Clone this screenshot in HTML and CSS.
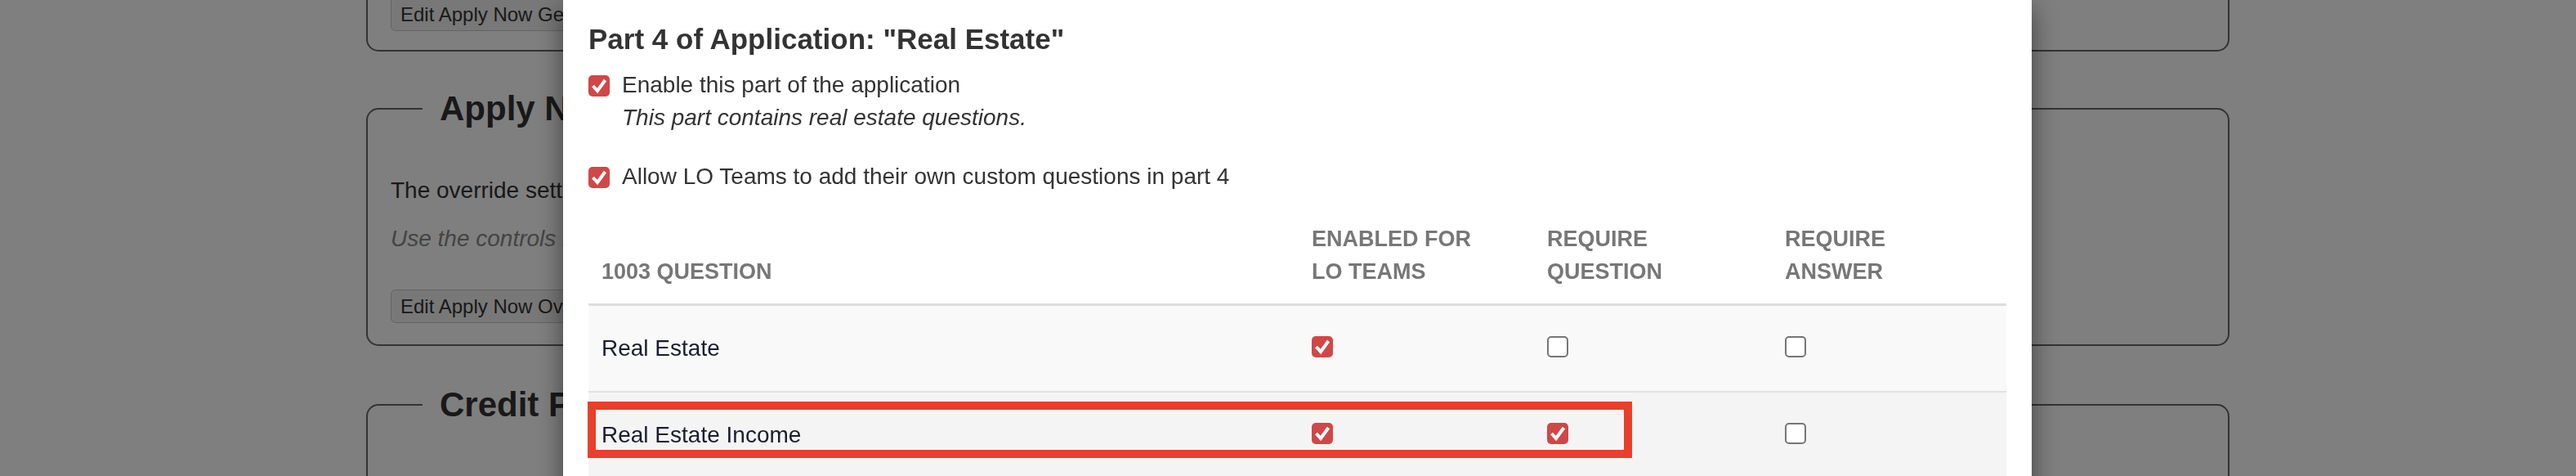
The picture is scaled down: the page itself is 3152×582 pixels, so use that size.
FILE: index.html
```html
<!DOCTYPE html>
<html lang="en">
<head>
<meta charset="utf-8">
<title>Part 4 of Application</title>
<link rel="stylesheet" href="styles.css">
</head>
<body>
<div class="page">
  <fieldset class="box box-first">
    <button class="btn" type="button">Edit Apply Now General</button>
  </fieldset>
  <fieldset class="box box-next">
    <legend class="box-legend">Apply Now</legend>
    <p class="txt txt-first">The override settings</p>
    <p class="txt txt-note">Use the controls below</p>
    <button class="btn btn-space" type="button">Edit Apply Now Overrides</button>
  </fieldset>
  <fieldset class="box box-last">
    <legend class="box-legend">Credit Pull</legend>
    <p class="txt txt-low">Choose how credit reports are requested.</p>
  </fieldset>
</div>

<div class="backdrop"></div>

<div class="modal">
  <h4 class="title">Part 4 of Application: "Real Estate"</h4>

  <div class="opt">
    <span class="cb cb-on"><svg viewBox="0 0 26 26" class="tick"><polyline points="5.5,13 11,19 20.5,6" /></svg></span>
    <div class="opt-text">
      <div>Enable this part of the application</div>
      <div class="opt-note">This part contains real estate questions.</div>
    </div>
  </div>

  <div class="opt opt-second">
    <span class="cb cb-on"><svg viewBox="0 0 26 26" class="tick"><polyline points="5.5,13 11,19 20.5,6" /></svg></span>
    <div class="opt-text">
      <div>Allow LO Teams to add their own custom questions in part 4</div>
    </div>
  </div>

  <table class="qtable">
    <colgroup>
      <col class="col-q">
      <col class="col-a">
      <col class="col-b">
      <col class="col-c">
    </colgroup>
    <thead>
      <tr>
        <th>1003 Question</th>
        <th>Enabled for<br>LO Teams</th>
        <th>Require<br>Question</th>
        <th>Require<br>Answer</th>
      </tr>
    </thead>
    <tbody>
      <tr class="row-odd">
        <td>Real Estate</td>
        <td><span class="cb cb-cell cb-on"><svg viewBox="0 0 26 26" class="tick"><polyline points="5.5,13 11,19 20.5,6" /></svg></span></td>
        <td><span class="cb cb-cell"></span></td>
        <td><span class="cb cb-cell"></span></td>
      </tr>
      <tr class="row-even">
        <td>Real Estate Income</td>
        <td><span class="cb cb-cell cb-on"><svg viewBox="0 0 26 26" class="tick"><polyline points="5.5,13 11,19 20.5,6" /></svg></span></td>
        <td><span class="cb cb-cell cb-on"><svg viewBox="0 0 26 26" class="tick"><polyline points="5.5,13 11,19 20.5,6" /></svg></span></td>
        <td><span class="cb cb-cell"></span></td>
      </tr>
    </tbody>
  </table>

  <div class="mark"></div>
</div>
</body>
</html>
```

FILE: styles.css
```css
html, body {
  margin: 0;
  padding: 0;
}

body {
  width: 3152px;
  height: 582px;
  overflow: hidden;
  background: #ffffff;
  font-family: "Liberation Sans", Arial, Helvetica, sans-serif;
  color: #333333;
}

/* ---------- background page ---------- */
.page {
  display: flow-root;
}

.box {
  box-sizing: border-box;
  width: 2280px;
  margin: 0 0 0 448px;
  padding: 0 28px 26px;
  border: 2px solid #666666;
  border-radius: 15px;
  min-inline-size: 0;
}

.box-first {
  margin-top: -100px;
  padding-top: 95px;
  padding-bottom: 23px;
}

.box-next {
  margin-top: 47px;
}

.box-last {
  margin-top: 49px;
}

.box-legend {
  margin-left: 39px;
  padding: 0 21px;
  font-size: 42px;
  line-height: 46px;
  font-weight: bold;
  color: #333333;
}

.txt {
  margin: 19px 0 0;
  font-size: 28px;
  line-height: 40px;
  color: #333333;
}

.txt-first {
  margin-top: 57px;
}

.txt-low {
  margin-top: 90px;
}

.txt-note {
  font-style: italic;
  color: #888888;
}

.btn {
  display: block;
  box-sizing: border-box;
  height: 41px;
  margin: 0;
  padding: 0 11px;
  border: 1px solid #c8c8c8;
  border-radius: 6px;
  background: #f0f0f0;
  font-family: "Liberation Sans", Arial, Helvetica, sans-serif;
  font-size: 24px;
  line-height: 39px;
  color: #333333;
}

.btn-space {
  margin-top: 42px;
}

/* ---------- overlay ---------- */
.backdrop {
  position: fixed;
  inset: 0;
  background: rgba(0, 0, 0, 0.5);
}

.modal {
  position: fixed;
  top: 0;
  left: 689px;
  box-sizing: border-box;
  width: 1797px;
  height: 700px;
  padding: 29px 31px 0;
  background: #ffffff;
  box-shadow: 0 10px 30px rgba(0, 0, 0, 0.5);
}

.title {
  margin: 0;
  font-size: 35px;
  line-height: 38px;
  font-weight: bold;
  color: #333333;
}

.opt {
  display: flex;
  gap: 15px;
  margin-top: 17px;
  font-size: 28px;
  line-height: 40px;
  color: #333333;
}

.opt-second {
  margin-top: 32px;
}

.opt > .cb {
  margin-top: 8px;
}

.opt-note {
  font-style: italic;
}

/* ---------- checkboxes ---------- */
.cb {
  display: block;
  flex-shrink: 0;
  box-sizing: border-box;
  width: 26px;
  height: 26px;
  border: 2px solid #767676;
  border-radius: 5px;
  background: #ffffff;
}

.cb-on {
  border: none;
  background: #d14747;
}

.tick {
  display: block;
  width: 26px;
  height: 26px;
}

.tick polyline {
  fill: none;
  stroke: #ffffff;
  stroke-width: 4;
  stroke-linejoin: miter;
}

.cb-cell {
  margin: 5px 0 9px;
}

/* ---------- table ---------- */
.qtable {
  width: 100%;
  margin-top: 20px;
  table-layout: fixed;
  border-collapse: collapse;
}

.col-q { width: 869px; }
.col-a { width: 288px; }
.col-b { width: 291px; }
.col-c { width: 287px; }

.qtable th {
  padding: 16px 16px 19px;
  border-bottom: 3px solid #dddddd;
  font-size: 27px;
  line-height: 40px;
  font-weight: bold;
  text-transform: uppercase;
  text-align: left;
  vertical-align: bottom;
  color: #777777;
}

.qtable td {
  padding: 32px 16px;
  border-top: 2px solid #e2e2e2;
  font-size: 28px;
  line-height: 40px;
  color: #1b1d2e;
  vertical-align: top;
}

.row-odd td {
  background: #f9f9f9;
}

.row-even td {
  background: #f4f4f4;
}

/* annotation box drawn over the second row */
.mark {
  position: absolute;
  left: 30px;
  top: 491px;
  box-sizing: border-box;
  width: 1278px;
  height: 69px;
  border: 10px solid #e8402a;
}
```
